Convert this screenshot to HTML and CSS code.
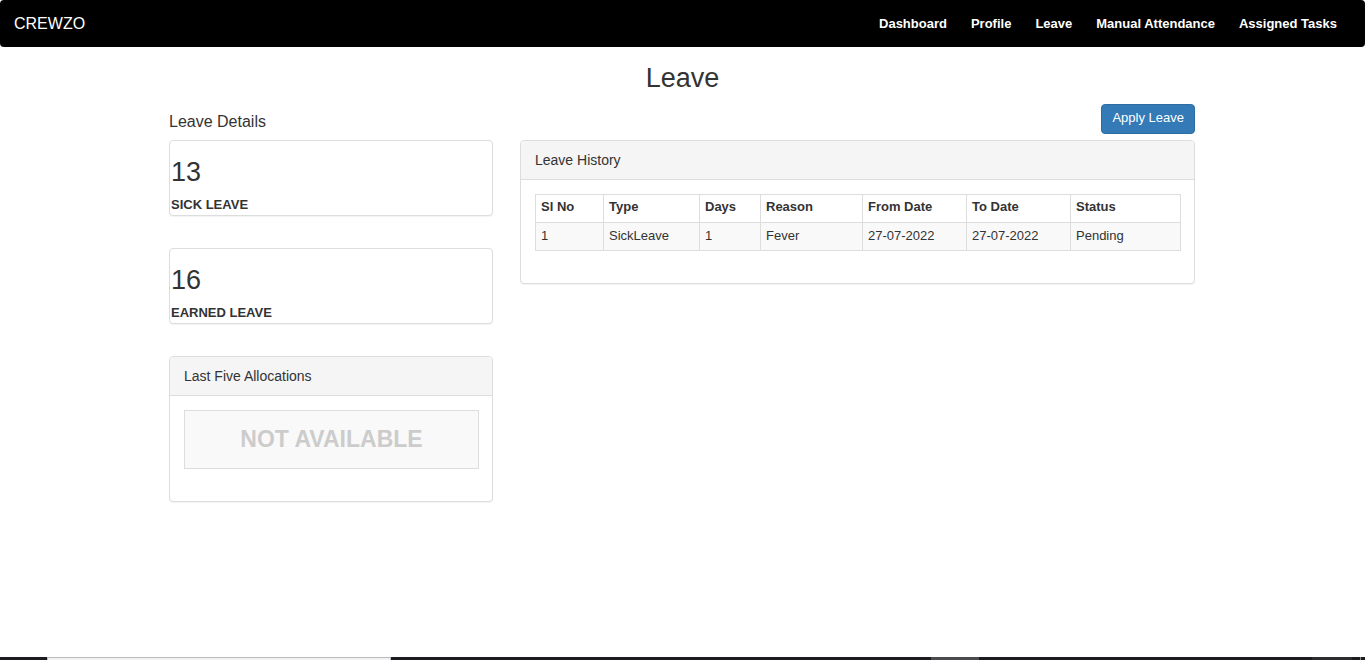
FILE: index.html
```
<!DOCTYPE html>
<html lang="en">
<head>
<meta charset="utf-8">
<meta name="viewport" content="width=device-width, initial-scale=1">
<title>Leave</title>
<link rel="stylesheet" href="styles.css">
</head>
<body>
<header class="navbar">
  <a class="brand" href="#">CREWZO</a>
  <nav class="nav">
    <a href="#">Dashboard</a>
    <a href="#">Profile</a>
    <a href="#">Leave</a>
    <a href="#">Manual Attendance</a>
    <a href="#">Assigned Tasks</a>
  </nav>
</header>
<main class="container">
  <h1 class="page-title">Leave</h1>
  <div class="row">
    <section class="col">
      <div class="col-head"><h2 class="section-title">Leave Details</h2></div>
      <div class="panel stat">
        <p class="stat-value">13</p>
        <p class="stat-label">SICK LEAVE</p>
      </div>
      <div class="panel stat">
        <p class="stat-value">16</p>
        <p class="stat-label">EARNED LEAVE</p>
      </div>
      <div class="panel">
        <h3 class="panel-head">Last Five Allocations</h3>
        <div class="panel-body">
          <p class="empty">NOT AVAILABLE</p>
        </div>
      </div>
    </section>
    <section class="col">
      <div class="col-head col-head-end"><button class="btn" type="button">Apply Leave</button></div>
      <div class="panel">
        <h3 class="panel-head">Leave History</h3>
        <div class="panel-body">
          <table class="table">
            <colgroup>
              <col class="c-no"><col class="c-type"><col class="c-days"><col class="c-reason"><col class="c-date"><col class="c-date"><col>
            </colgroup>
            <thead>
              <tr><th>Sl No</th><th>Type</th><th>Days</th><th>Reason</th><th>From Date</th><th>To Date</th><th>Status</th></tr>
            </thead>
            <tbody>
              <tr><td>1</td><td>SickLeave</td><td>1</td><td>Fever</td><td>27-07-2022</td><td>27-07-2022</td><td>Pending</td></tr>
            </tbody>
          </table>
        </div>
      </div>
    </section>
  </div>
</main>
<footer class="taskbar">
  <span class="task-search"></span>
  <span class="task-active"></span>
  <span class="task-tray"></span>
  <span class="task-edge"></span>
</footer>
</body>
</html>
```
FILE: styles.css
```
* { box-sizing: border-box; }

body {
  margin: 0;
  min-height: 100vh;
  display: flex;
  flex-direction: column;
  background: #fff;
  color: #333;
  font: 13px/18px "Liberation Sans", Arial, sans-serif;
}

h1, h2, h3, p { margin: 0; font-weight: 400; }

.navbar {
  display: flex;
  align-items: center;
  justify-content: space-between;
  padding: 14px 28px 14px 14px;
  background: #000;
  border-radius: 4px;
}
.navbar a { color: #fff; text-decoration: none; }
.brand { font-size: 16px; line-height: 19px; }
.nav { display: flex; gap: 24px; font-weight: 700; }

.container {
  width: 100%;
  max-width: 1053px;
  margin: 0 auto;
  flex: 1;
}
.page-title {
  padding-top: 16px;
  text-align: center;
  font-size: 27px;
  line-height: 30px;
}
.row { display: grid; grid-template-columns: 1fr 2fr; }
.col { min-width: 0; padding: 0 14px 0 13px; }
.col-head {
  display: flex;
  align-items: flex-end;
  height: 47px;
  padding-bottom: 6px;
}
.col-head-end { justify-content: flex-end; }
.section-title { font-size: 16px; line-height: 18px; padding-bottom: 3px; }

.btn {
  height: 30px;
  padding: 0 10px 3px;
  border: 1px solid #2e6da4;
  border-radius: 4px;
  background: #337ab7;
  color: #fff;
  font: inherit;
  cursor: pointer;
}

.panel {
  margin-bottom: 32px;
  border: 1px solid #ddd;
  border-radius: 4px;
  background: #fff;
  box-shadow: 0 1px 1px rgba(0, 0, 0, .05);
}
.panel-head {
  padding: 10px 14px;
  border-bottom: 1px solid #ddd;
  border-radius: 3px 3px 0 0;
  background: #f5f5f5;
  font-size: 14px;
}
.panel-body { padding: 14px 13px 32px 14px; }

.stat { padding: 16px 1px 1px; }
.stat-value { padding-bottom: 9px; font-size: 27px; line-height: 30px; }
.stat-label { font-weight: 700; }

.empty {
  padding: 14px;
  border: 1px solid #ddd;
  background: #f9f9f9;
  color: #ccc;
  text-align: center;
  font-size: 23px;
  line-height: 29px;
  font-weight: 700;
}

.table {
  width: 100%;
  table-layout: fixed;
  border-collapse: collapse;
}
.table th, .table td {
  padding: 3px 5px 6px;
  border: 1px solid #ddd;
  text-align: left;
}
.table td { padding: 4px 5px 5px; }
.table tbody tr { background: #f9f9f9; }
.c-no { width: 68px; }
.c-type { width: 96px; }
.c-days { width: 61px; }
.c-reason { width: 102px; }
.c-date { width: 104px; }

.taskbar { display: flex; height: 3px; background: #1c1b1f; }
.task-search {
  width: 344px;
  margin-left: 47px;
  border: 1px solid #bbb;
  border-bottom: 0;
  background: #f2f2f2;
}
.task-active { width: 48px; margin-left: auto; background: #4b4b4d; }
.task-tray { width: 40px; margin-left: 333px; background: #2c2b2e; }
.task-edge { width: 1px; margin: 0 4px 0 8px; background: #888; }
```
